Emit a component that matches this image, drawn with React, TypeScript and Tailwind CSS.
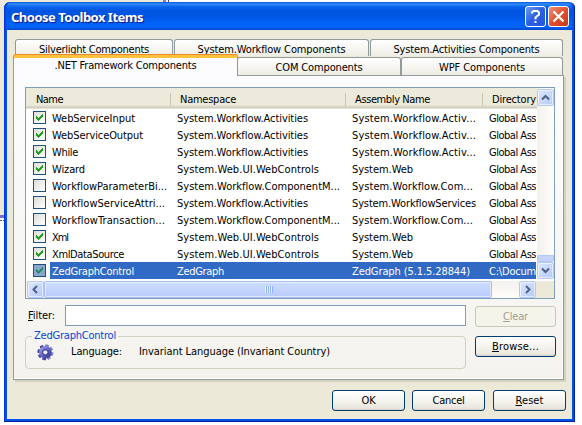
import { useLayoutEffect, useRef, useState } from 'react';
import type { ReactNode } from 'react';

type FitProps = { w: number; children: ReactNode; className?: string };

/** Text run whose letter spacing is adjusted so that it spans `w` pixels. */
function Fit({ w, children, className = '' }: FitProps) {
  const ref = useRef<HTMLSpanElement>(null);
  const [spacing, setSpacing] = useState(0);
  useLayoutEffect(() => {
    const el = ref.current;
    if (!el) return;
    const count = (el.textContent ?? '').length;
    setSpacing((w - el.getBoundingClientRect().width) / count);
  }, [w]);
  return (
    <span ref={ref} className={`inline-block whitespace-pre ${className}`} style={{ letterSpacing: `${spacing}px` }}>
      {children}
    </span>
  );
}

type Cell = [string, number];
type Item = { state: 'on' | 'off' | 'selected'; name: Cell; ns: Cell; asm: Cell };

const activities: Cell = ['System.Workflow.Activities', 131];
const webControls: Cell = ['System.Web.UI.WebControls', 142];
const componentModel: Cell = ['System.Workflow.ComponentM...', 163];
const asmActivities: Cell = ['System.Workflow.Activ...', 124];
const asmComponent: Cell = ['System.Workflow.Com...', 121];
const asmWeb: Cell = ['System.Web', 61];

const items: Item[] = [
  { state: 'on', name: ['WebServiceInput', 83], ns: activities, asm: asmActivities },
  { state: 'on', name: ['WebServiceOutput', 91], ns: activities, asm: asmActivities },
  { state: 'on', name: ['While', 26], ns: activities, asm: asmActivities },
  { state: 'on', name: ['Wizard', 33], ns: webControls, asm: asmWeb },
  { state: 'off', name: ['WorkflowParameterBi...', 115], ns: componentModel, asm: asmComponent },
  { state: 'off', name: ['WorkflowServiceAttri...', 113], ns: activities, asm: ['System.WorkflowServices', 124] },
  { state: 'off', name: ['WorkflowTransaction...', 113], ns: componentModel, asm: asmComponent },
  { state: 'on', name: ['Xml', 16], ns: webControls, asm: asmWeb },
  { state: 'on', name: ['XmlDataSource', 72], ns: webControls, asm: asmWeb },
  { state: 'selected', name: ['ZedGraphControl', 82], ns: ['ZedGraph', 47], asm: ['ZedGraph (5.1.5.28844)', 118] },
];

function Checkbox({ state }: { state: Item['state'] }) {
  const selected = state === 'selected';
  return (
    <span
      className={`flex size-[13px] shrink-0 border border-[#1c5180] ${
        selected ? 'bg-[#8ba6cc]' : 'bg-linear-to-br from-[#dcdcd7] to-white'
      }`}
    >
      {state !== 'off' && (
        <svg width="11" height="11" viewBox="0 0 11 11" shapeRendering="crispEdges">
          <path
            d="M2 4h1v1h1v1h1v-1h1v-1h1v-1h1v-1h1v3h-1v1h-1v1h-1v1h-1v1h-1v-1h-1v-1h-1z"
            fill={selected ? '#2a8a6e' : '#21a121'}
          />
        </svg>
      )}
    </span>
  );
}

function Row({ item }: { item: Item }) {
  const selected = item.state === 'selected';
  return (
    <div className="flex h-[17px] items-center pl-[7px]">
      <Checkbox state={item.state} />
      <div
        className={`ml-1 flex h-[17px] flex-1 items-center pt-[2px] pl-[2px] ${
          selected ? 'bg-[#316ac5] text-white' : ''
        }`}
      >
        <div className="w-[125px] shrink-0"><Fit w={item.name[1]}>{item.name[0]}</Fit></div>
        <div className="w-[175px] shrink-0"><Fit w={item.ns[1]}>{item.ns[0]}</Fit></div>
        <div className="w-[137px] shrink-0"><Fit w={item.asm[1]}>{item.asm[0]}</Fit></div>
        <Fit w={47}>{selected ? 'C:\\Docum' : 'Global Ass'}</Fit>
      </div>
      <div className="h-[17px] w-px bg-white" />
    </div>
  );
}

function ArrowButton({ d, className = '' }: { d: string; className?: string }) {
  return (
    <div
      className={`flex items-center justify-center rounded-[2px] border border-[#b4c8f6] bg-linear-to-br from-[#dce6ff] to-[#b6cbf8] shadow-[inset_0_0_0_1px_#ffffff90] ${className}`}
    >
      <svg width="9" height="9" viewBox="0 0 9 9" fill="none" stroke="#4d6185" strokeWidth="2">
        <path d={d} />
      </svg>
    </div>
  );
}

function Tab({ label, w, className }: { label: string; w: number; className: string }) {
  return (
    <div
      className={`flex justify-center rounded-t-[3px] border border-b-0 border-[#919b9c] bg-linear-to-b from-white to-[#eeede5] ${className}`}
    >
      <Fit w={w}>{label}</Fit>
    </div>
  );
}

function PushButton({ w, className, disabled, children }: FitProps & { disabled?: boolean }) {
  return (
    <button
      className={`flex h-[21px] items-center justify-center rounded-[3px] border pt-px ${
        disabled
          ? 'border-[#c9c7ba] bg-[#f5f4ea] text-[#a1a192]'
          : 'border-[#003c74] bg-linear-to-b from-white via-[#f5f4ef] to-[#e6e3da] shadow-[inset_0_-1px_0_#d6d0c5]'
      } ${className}`}
    >
      <Fit w={w}>{children}</Fit>
    </button>
  );
}

function Key({ children }: { children: string }) {
  return <span className="underline decoration-1 underline-offset-1">{children}</span>;
}

function Gear() {
  return (
    <svg width="17" height="17" viewBox="0 0 17 17">
      <defs>
        <linearGradient id="gear" x1="0" y1="0" x2="1" y2="1">
          <stop offset="0" stopColor="#a9a9ec" />
          <stop offset="0.5" stopColor="#6565c4" />
          <stop offset="1" stopColor="#2b2b78" />
        </linearGradient>
      </defs>
      {[0, 45, 90, 135].map((a) => (
        <rect key={a} x="6.5" y="0.3" width="3.8" height="16" rx="0.8" fill="url(#gear)" transform={`rotate(${a + 12} 8.4 8.3)`} />
      ))}
      <circle cx="8.4" cy="8.3" r="6.2" fill="url(#gear)" />
      <circle cx="8.4" cy="8.3" r="3" fill="none" stroke="#4545a0" strokeWidth="1" />
      <circle cx="8.4" cy="8.3" r="1.9" fill="#eeeef8" />
    </svg>
  );
}

function TitleBar() {
  return (
    <div className="flex h-7 items-center rounded-t-[5px] bg-[linear-gradient(to_bottom,#0a55d5_0px,#2f8cf9_2px,#0a62ea_5px,#0055e0_9px,#0055e3_14px,#0263fb_22px,#0163fa_25px,#0048c8_28px)] pr-[3px] pl-[4px] text-white">
      <Fit w={132} className="flex-none pt-px font-['Noto_Sans'] text-[13px] leading-4 font-bold [text-shadow:1px_1px_1px_#0a1883]">
        Choose Toolbox Items
      </Fit>
      <div className="mt-px ml-auto flex gap-[2px]">
        <div className="flex size-[21px] items-center justify-center rounded-[3px] border border-white bg-linear-to-br from-[#6f9bf2] via-[#2c5ee0] to-[#2058e0]">
          <svg width="13" height="15" viewBox="0 0 13 15" fill="none" stroke="white" strokeWidth="2">
            <path d="M3 4.6V3.5L4.5 2h4L10 3.5v2L6.5 8.5V10.5" />
            <path d="M6.5 12v2" />
          </svg>
        </div>
        <div className="flex size-[21px] items-center justify-center rounded-[3px] border border-white bg-linear-to-br from-[#ee9178] via-[#df5030] to-[#c53b14]">
          <svg width="13" height="13" viewBox="0 0 13 13" stroke="white" strokeWidth="2.2">
            <path d="M1.5 1.5l10 10M11.5 1.5l-10 10" />
          </svg>
        </div>
      </div>
    </div>
  );
}

function ComponentList() {
  return (
    <div className="flex h-[212px] w-[530px] flex-col border border-[#7f9db9] bg-white">
      <div className="flex h-[191px]">
        <div className="w-[511px]">
          <div className="flex h-[21px] items-stretch bg-[linear-gradient(to_bottom,#ebeadb_0px,#ebeadb_17px,#d8d4c4_19px,#cbc7b8_20px,#fff_21px)] pt-[5px] pb-[3px]">
            <div className="flex w-[145px] shrink-0 border-r border-[#c7c5b2] pl-[10px]"><Fit w={27}>Name</Fit></div>
            <div className="flex w-[175px] shrink-0 border-r border-[#c7c5b2] pl-[9px]"><Fit w={56}>Namespace</Fit></div>
            <div className="flex w-[137px] shrink-0 border-r border-[#c7c5b2] pl-[9px]"><Fit w={75}>Assembly Name</Fit></div>
            <div className="pl-[9px]"><Fit w={44}>Directory</Fit></div>
          </div>
          {items.map((item) => <Row key={item.name[0]} item={item} />)}
        </div>
        <div className="flex w-[17px] flex-col bg-linear-to-r from-[#f3f1ec] to-[#fefefb] pt-px">
          <ArrowButton className="h-[17px]" d="M1 6.5L4.5 3L8 6.5" />
          <div className="mt-auto h-[7px] rounded-t-[1px] rounded-b-[2px] border border-[#b4c8f6] bg-[#c4d4fb]" />
          <ArrowButton className="h-[17px]" d="M1 2.5L4.5 6L8 2.5" />
        </div>
      </div>
      <div className="mt-[2px] flex h-[17px] bg-linear-to-b from-[#f3f1ec] to-[#fefefb] pl-px">
        <ArrowButton className="w-[17px]" d="M6 1L2.5 4.5L6 8" />
        <div className="flex w-[448px] items-center justify-center gap-px rounded-[2px] border border-[#a6bdf0] bg-linear-to-b from-[#cddcff] to-[#b9cbf9] shadow-[inset_0_0_0_1px_#ffffff80]">
          {[0, 1, 2, 3].map((n) => <span key={n} className="h-[7px] w-px bg-[#eef4fe] shadow-[1px_0_0_#8cb0f8]" />)}
        </div>
        <ArrowButton className="ml-auto w-[17px]" d="M3 1L6.5 4.5L3 8" />
        <div className="w-[18px] bg-[#ece9d8]" />
      </div>
    </div>
  );
}

export default function App() {
  return (
    <div className="relative h-[425px] w-[582px] overflow-hidden bg-white font-['DejaVu_Sans_Condensed','DejaVu_Sans',sans-serif] text-[11px] leading-[14px] font-[stretch:condensed] text-black">
      <div className="absolute top-0 left-0 h-[215px] w-[163px] bg-[#ece9d8]" />
      <div className="absolute top-0 left-[163px] h-1 w-[3px] bg-[#7b7bcf]" />
      <div className="absolute top-0 left-[168px] h-1 w-px bg-[#555555]" />
      <div className="absolute top-[215px] left-0 h-[3px] w-1 bg-[#6f6fc8]" />
      <div className="absolute top-[220px] left-0 w-1 border-t border-dotted border-[#555555]" />

      <div className="absolute top-[2px] left-1 flex h-[420px] w-[571px] flex-col rounded-t-[6px] bg-[#0054e3] px-[3px] pb-[3px] shadow-[inset_-1px_-1px_0_#001ea0,inset_1px_0_0_#0831d9]">
        <TitleBar />
        <div className="flex h-[389px] flex-col bg-[#ece9d8] pt-[9px] pl-[6px]">
          <div className="flex h-[17px] gap-px pl-[2px]">
            <Tab label="Silverlight Components" w={110} className="w-[158px] pt-[3px]" />
            <Tab label="System.Workflow Components" w={148} className="w-[195px] pt-[3px]" />
            <Tab label="System.Activities Components" w={146} className="w-[193px] pt-[3px]" />
          </div>
          <div className="relative z-10 -mt-px flex h-[21px] items-end">
            <div className="flex h-[21px] w-[225px] justify-center rounded-t-[3px] border-x border-t-[3px] border-x-[#919b9c] border-t-[#ffc23c] bg-[#fcfcfe] pt-px shadow-[0_-1px_0_0_#e68b2c]">
              <Fit w={142}>.NET Framework Components</Fit>
            </div>
            <Tab label="COM Components" w={87} className="mb-px -ml-px h-[18px] w-[164px] pt-[3px]" />
            <Tab label="WPF Components" w={86} className="mb-px h-[18px] w-[162px] pt-[3px]" />
          </div>
          <div className="-mt-px flex h-[305px] w-[551px] flex-col border border-[#919b9c] bg-linear-to-b from-[#fcfcfe] to-[#f4f3ee] pt-[11px] pl-[11px] shadow-[inset_-1px_-1px_0_#fff,2px_2px_0_#d6d2c2]">
            <ComponentList />
            <div className="mt-[6px] flex items-start pl-[3px]">
              <div className="w-[37px] pt-[4px]"><Fit w={27}><Key>F</Key>ilter:</Fit></div>
              <div className="h-[21px] w-[401px] border border-[#7f9db9] bg-white" />
              <PushButton w={25} disabled className="mt-px ml-[9px] w-[81px]"><Key>C</Key>lear</PushButton>
            </div>
            <div className="mt-[9px] flex items-start">
              <div className="relative flex h-[33px] w-[441px] items-center rounded-[4px] border border-[#d0d0bf] pb-px pl-[11px]">
                <div className="absolute -top-[8px] left-[6px] bg-[#f6f5f1] px-[2px] text-[#0046d5]"><Fit w={82}>ZedGraphControl</Fit></div>
                <Gear />
                <div className="ml-[17px] w-[68px]"><Fit w={51}>Language:</Fit></div>
                <Fit w={191}>Invariant Language (Invariant Country)</Fit>
              </div>
              <PushButton w={47} className="ml-[9px] w-[81px]"><Key>B</Key>rowse...</PushButton>
            </div>
          </div>
          <div className="mt-[10px] flex pl-[319px]">
            <PushButton w={14} className="w-[73px]">OK</PushButton>
            <PushButton w={32} className="ml-[7px] w-[73px]">Cancel</PushButton>
            <PushButton w={28} className="ml-[8px] w-[73px]"><Key>R</Key>eset</PushButton>
          </div>
        </div>
      </div>
    </div>
  );
}
